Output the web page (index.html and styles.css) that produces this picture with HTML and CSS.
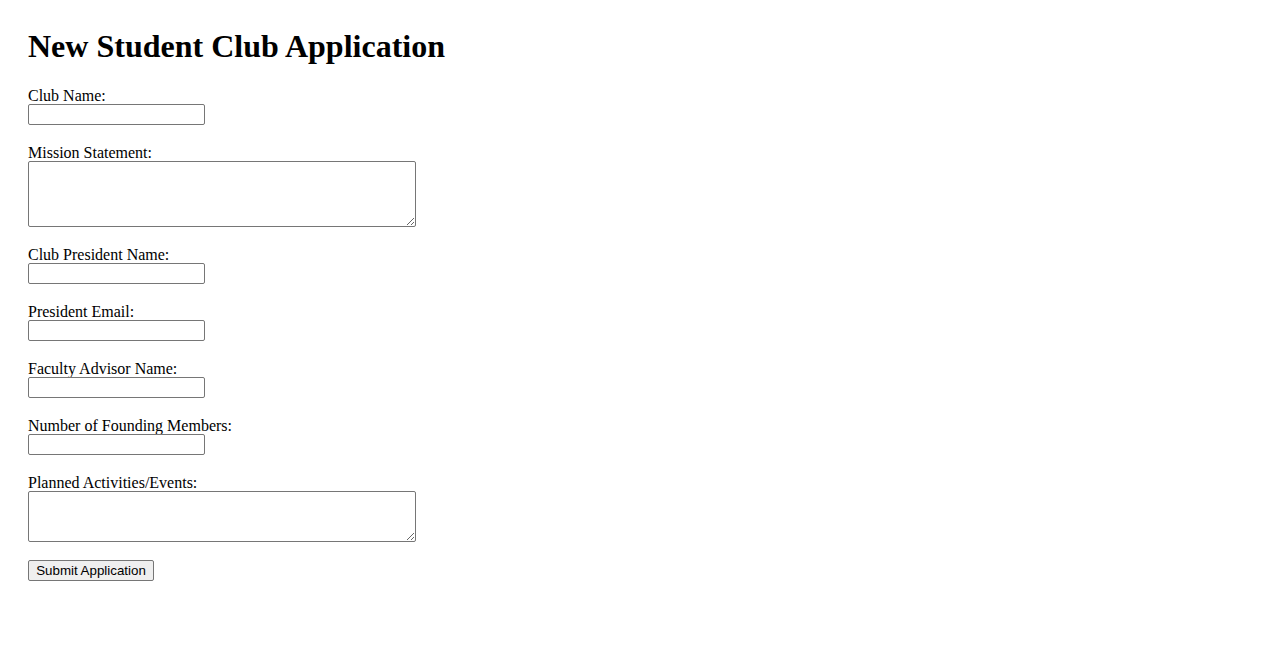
FILE: index.html
```html
<!DOCTYPE html>
<html lang="en">
<head>
<meta charset="utf-8">
<title>New Student Club Application</title>
<link rel="stylesheet" href="styles.css">
</head>
<body>
<main class="page">
  <h1 class="title">New Student Club Application</h1>
  <form class="club-form">
    <div class="field">
      <label class="field-label" for="club-name">Club Name:</label>
      <input class="text-input" type="text" id="club-name">
    </div>
    <div class="field">
      <label class="field-label" for="mission">Mission Statement:</label>
      <textarea class="text-area text-area-tall" id="mission"></textarea>
    </div>
    <div class="field">
      <label class="field-label" for="president">Club President Name:</label>
      <input class="text-input" type="text" id="president">
    </div>
    <div class="field">
      <label class="field-label" for="email">President Email:</label>
      <input class="text-input" type="email" id="email">
    </div>
    <div class="field">
      <label class="field-label" for="advisor">Faculty Advisor Name:</label>
      <input class="text-input" type="text" id="advisor">
    </div>
    <div class="field">
      <label class="field-label" for="members">Number of Founding Members:</label>
      <input class="text-input" type="number" id="members">
    </div>
    <div class="field">
      <label class="field-label" for="activities">Planned Activities/Events:</label>
      <textarea class="text-area text-area-short" id="activities"></textarea>
    </div>
    <div class="field">
      <button class="submit-btn" type="submit">Submit Application</button>
    </div>
  </form>
</main>
</body>
</html>
```
FILE: styles.css
```css
html, body {
  margin: 0;
  padding: 0;
  background: #ffffff;
}

body {
  font-family: "Liberation Serif", "Times New Roman", serif;
  font-size: 16px;
  line-height: 18px;
  color: #000000;
}

.page {
  padding: 28px;
}

.title {
  margin: 0 0 21px 0;
  font-size: 32px;
  line-height: 37px;
  font-weight: bold;
}

.club-form {
  display: flex;
  flex-direction: column;
  align-items: flex-start;
}

.field {
  display: flex;
  flex-direction: column;
  align-items: flex-start;
  margin-bottom: 18px;
}

.field-label {
  display: block;
  height: 18px;
  line-height: 20px;
}

.text-input {
  box-sizing: border-box;
  width: 177px;
  height: 21px;
  margin: 0;
  padding: 1px 2px;
  border: 1px solid #767676;
  border-radius: 2px;
  background: #ffffff;
  font-family: "Liberation Sans", Arial, sans-serif;
  font-size: 13.33px;
}

.text-input[type="number"]::-webkit-inner-spin-button,
.text-input[type="number"]::-webkit-outer-spin-button {
  -webkit-appearance: none;
  margin: 0;
}

.text-area {
  box-sizing: border-box;
  width: 388px;
  margin: 0;
  padding: 2px;
  border: 1px solid #767676;
  border-radius: 2px;
  background: #ffffff;
  font-family: "Liberation Mono", monospace;
  font-size: 13.33px;
}

.text-area-tall {
  height: 66px;
}

.text-area-short {
  height: 51px;
}

.submit-btn {
  box-sizing: border-box;
  width: 126px;
  height: 21px;
  margin: 0;
  padding: 1px 6px;
  border: 1px solid #767676;
  border-radius: 2px;
  background: #efefef;
  color: #000000;
  font-family: "Liberation Sans", Arial, sans-serif;
  font-size: 13.33px;
  line-height: normal;
}
```
